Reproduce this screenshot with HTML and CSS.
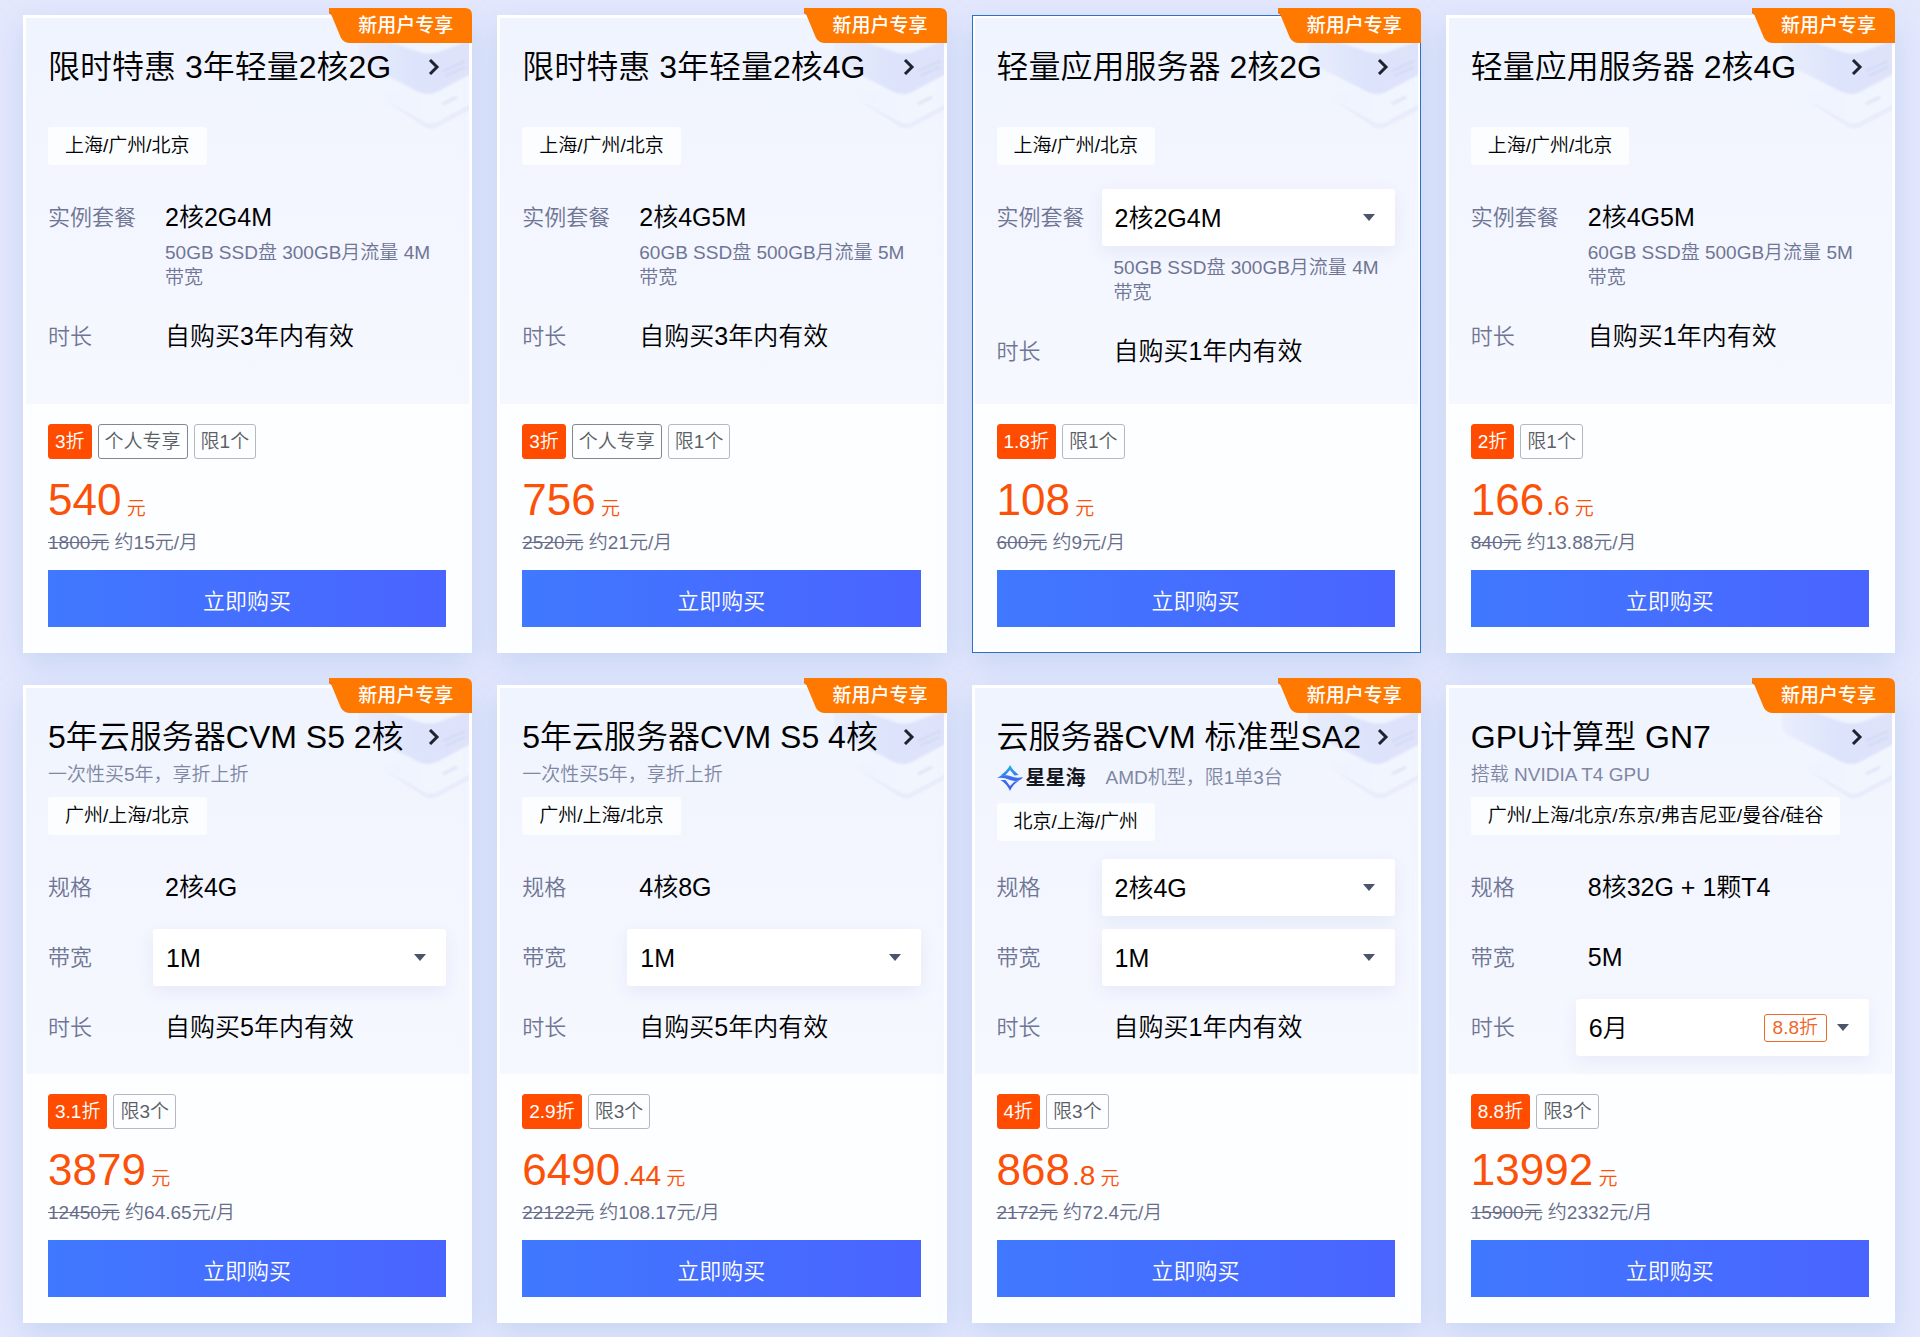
FILE: index.html
```html
<!DOCTYPE html>
<html lang="zh-CN">
<head>
<meta charset="utf-8">
<meta name="viewport" content="width=device-width, initial-scale=1">
<title>云服务器特惠</title>
<link rel="stylesheet" href="styles.css">
</head>
<body>
<svg class="sprite" width="0" height="0" aria-hidden="true">
  <defs>
    <linearGradient id="slab" x1="0" y1="0" x2="1" y2="0">
      <stop offset="0" stop-color="#e9edfd"/>
      <stop offset="0.5" stop-color="#d9e1fb"/>
      <stop offset="1" stop-color="#dde1fa"/>
    </linearGradient>
    <linearGradient id="base" x1="0" y1="0" x2="1" y2="0">
      <stop offset="0" stop-color="#eff3fe"/>
      <stop offset="1" stop-color="#f3f6fe"/>
    </linearGradient>
    <linearGradient id="star" x1="0" y1="0" x2="0" y2="1">
      <stop offset="0" stop-color="#22b5e6"/>
      <stop offset="0.5" stop-color="#3a6ff0"/>
      <stop offset="1" stop-color="#3f5cf5"/>
    </linearGradient>
    <filter id="soft" x="-10%" y="-10%" width="120%" height="120%"><feGaussianBlur stdDeviation="1"/></filter>
  </defs>
  <symbol id="decor" viewBox="0 0 112 116">
    <g filter="url(#soft)">
      <path d="M24 80 L68 104 Q74 107 80 104 L114 84 L114 91 L80 109 Q74 112 68 109 Z" fill="#e6eafa"/>
      <path d="M24 78 L60 68 L114 54 L114 86 L82 103 Q74 107 66 103 Z" fill="url(#base)"/>
      <path d="M2 22 L114 22 L114 56 L80 74 Q71 78 62 74 L8 47 Q2 43 2 38 Z" fill="url(#slab)"/>
      <path d="M26 22 L114 22 L82 34 Q72 37 62 34 Z" fill="#f0f4fe"/>
      <path d="M86 53 L108 43 M88 58 L108 49" stroke="#cdd5f3" stroke-width="2" fill="none"/>
      <path d="M86 86 L100 79" stroke="#dde2f4" stroke-width="3" fill="none"/>
    </g>
  </symbol>
  <symbol id="ribbon" viewBox="0 0 143 35">
    <path d="M0 0 H3 V7 L0 5 Z" fill="#c25400"/>
    <path d="M0 0 H136 Q143 0 143 7 V35 H21 Q15 35 12 30 L2 6 L0 4 Z" fill="#ff7800"/>
  </symbol>
  <symbol id="chevron" viewBox="0 0 12 16">
    <path d="M2 1 L9 8 L2 15" fill="none" stroke="#1d2330" stroke-width="3"/>
  </symbol>
  <symbol id="caret" viewBox="0 0 12 7">
    <path d="M0 0 H12 L6 7 Z" fill="#4b5468"/>
  </symbol>
  <symbol id="starsea" viewBox="0 0 26 26">
    <path fill="url(#star)" fill-rule="evenodd" d="M13 0 Q16 6 22 10 L17.500 10.500 L13 5 L8.500 10 L3.500 10.500 Q10 6 13 0 Z M0 13 Q6 8 13 11 Q20 14 26 12 Q22 18 13 15 Q6 12 0 13 Z M13 26 Q10 19 3.500 15 L8.500 15 L13 21 L17.500 16.500 L22 16 Q16 19 13 26 Z"/>
  </symbol>
</svg>

<main class="grid">

  <article class="card">
    <span class="badge"><svg class="badge-shape"><use href="#ribbon"/></svg><span class="badge-text">新用户专享</span></span>
    <div class="panel">
      <svg class="decor"><use href="#decor"/></svg>
      <header class="head">
        <div class="intro">
          <a class="title" href="#"><span>限时特惠 3年轻量2核2G</span><svg class="chevron"><use href="#chevron"/></svg></a>
        </div>
        <span class="region">上海/广州/北京</span>
      </header>
      <dl class="specs">
        <div class="row"><dt>实例套餐</dt><dd><p class="value">2核2G4M</p><p class="desc">50GB SSD盘 300GB月流量 4M带宽</p></dd></div>
        <div class="row"><dt>时长</dt><dd><p class="value">自购买3年内有效</p></dd></div>
      </dl>
    </div>
    <div class="foot">
      <div class="tags"><span class="tag tag-hot">3折</span><span class="tag tag-dark">个人专享</span><span class="tag">限1个</span></div>
      <p class="price"><strong>540</strong> 元</p>
      <p class="old"><del>1800元</del> 约15元/月</p>
      <button class="buy" type="button">立即购买</button>
    </div>
  </article>

  <article class="card">
    <span class="badge"><svg class="badge-shape"><use href="#ribbon"/></svg><span class="badge-text">新用户专享</span></span>
    <div class="panel">
      <svg class="decor"><use href="#decor"/></svg>
      <header class="head">
        <div class="intro">
          <a class="title" href="#"><span>限时特惠 3年轻量2核4G</span><svg class="chevron"><use href="#chevron"/></svg></a>
        </div>
        <span class="region">上海/广州/北京</span>
      </header>
      <dl class="specs">
        <div class="row"><dt>实例套餐</dt><dd><p class="value">2核4G5M</p><p class="desc">60GB SSD盘 500GB月流量 5M带宽</p></dd></div>
        <div class="row"><dt>时长</dt><dd><p class="value">自购买3年内有效</p></dd></div>
      </dl>
    </div>
    <div class="foot">
      <div class="tags"><span class="tag tag-hot">3折</span><span class="tag tag-dark">个人专享</span><span class="tag">限1个</span></div>
      <p class="price"><strong>756</strong> 元</p>
      <p class="old"><del>2520元</del> 约21元/月</p>
      <button class="buy" type="button">立即购买</button>
    </div>
  </article>

  <article class="card card-active">
    <span class="badge"><svg class="badge-shape"><use href="#ribbon"/></svg><span class="badge-text">新用户专享</span></span>
    <div class="panel">
      <svg class="decor"><use href="#decor"/></svg>
      <header class="head">
        <div class="intro">
          <a class="title" href="#"><span>轻量应用服务器 2核2G</span><svg class="chevron"><use href="#chevron"/></svg></a>
        </div>
        <span class="region">上海/广州/北京</span>
      </header>
      <dl class="specs">
        <div class="row"><dt><label for="plan-3">实例套餐</label></dt><dd><div class="picker"><select id="plan-3"><option>2核2G4M</option></select><span class="picker-end"><svg class="caret"><use href="#caret"/></svg></span></div><p class="desc">50GB SSD盘 300GB月流量 4M带宽</p></dd></div>
        <div class="row"><dt>时长</dt><dd><p class="value">自购买1年内有效</p></dd></div>
      </dl>
    </div>
    <div class="foot">
      <div class="tags"><span class="tag tag-hot">1.8折</span><span class="tag">限1个</span></div>
      <p class="price"><strong>108</strong> 元</p>
      <p class="old"><del>600元</del> 约9元/月</p>
      <button class="buy" type="button">立即购买</button>
    </div>
  </article>

  <article class="card">
    <span class="badge"><svg class="badge-shape"><use href="#ribbon"/></svg><span class="badge-text">新用户专享</span></span>
    <div class="panel">
      <svg class="decor"><use href="#decor"/></svg>
      <header class="head">
        <div class="intro">
          <a class="title" href="#"><span>轻量应用服务器 2核4G</span><svg class="chevron"><use href="#chevron"/></svg></a>
        </div>
        <span class="region">上海/广州/北京</span>
      </header>
      <dl class="specs">
        <div class="row"><dt>实例套餐</dt><dd><p class="value">2核4G5M</p><p class="desc">60GB SSD盘 500GB月流量 5M带宽</p></dd></div>
        <div class="row"><dt>时长</dt><dd><p class="value">自购买1年内有效</p></dd></div>
      </dl>
    </div>
    <div class="foot">
      <div class="tags"><span class="tag tag-hot">2折</span><span class="tag">限1个</span></div>
      <p class="price"><strong>166</strong><span class="cents">.6</span> 元</p>
      <p class="old"><del>840元</del> 约13.88元/月</p>
      <button class="buy" type="button">立即购买</button>
    </div>
  </article>

  <article class="card">
    <span class="badge"><svg class="badge-shape"><use href="#ribbon"/></svg><span class="badge-text">新用户专享</span></span>
    <div class="panel">
      <svg class="decor"><use href="#decor"/></svg>
      <header class="head">
        <div class="intro">
          <a class="title" href="#"><span>5年云服务器CVM S5 2核</span><svg class="chevron"><use href="#chevron"/></svg></a>
          <p class="sub">一次性买5年，享折上折</p>
        </div>
        <span class="region">广州/上海/北京</span>
      </header>
      <dl class="specs">
        <div class="row"><dt>规格</dt><dd><p class="value">2核4G</p></dd></div>
        <div class="row"><dt><label for="band-5">带宽</label></dt><dd><div class="picker"><select id="band-5"><option>1M</option></select><span class="picker-end"><svg class="caret"><use href="#caret"/></svg></span></div></dd></div>
        <div class="row"><dt>时长</dt><dd><p class="value">自购买5年内有效</p></dd></div>
      </dl>
    </div>
    <div class="foot">
      <div class="tags"><span class="tag tag-hot">3.1折</span><span class="tag">限3个</span></div>
      <p class="price"><strong>3879</strong> 元</p>
      <p class="old"><del>12450元</del> 约64.65元/月</p>
      <button class="buy" type="button">立即购买</button>
    </div>
  </article>

  <article class="card">
    <span class="badge"><svg class="badge-shape"><use href="#ribbon"/></svg><span class="badge-text">新用户专享</span></span>
    <div class="panel">
      <svg class="decor"><use href="#decor"/></svg>
      <header class="head">
        <div class="intro">
          <a class="title" href="#"><span>5年云服务器CVM S5 4核</span><svg class="chevron"><use href="#chevron"/></svg></a>
          <p class="sub">一次性买5年，享折上折</p>
        </div>
        <span class="region">广州/上海/北京</span>
      </header>
      <dl class="specs">
        <div class="row"><dt>规格</dt><dd><p class="value">4核8G</p></dd></div>
        <div class="row"><dt><label for="band-6">带宽</label></dt><dd><div class="picker"><select id="band-6"><option>1M</option></select><span class="picker-end"><svg class="caret"><use href="#caret"/></svg></span></div></dd></div>
        <div class="row"><dt>时长</dt><dd><p class="value">自购买5年内有效</p></dd></div>
      </dl>
    </div>
    <div class="foot">
      <div class="tags"><span class="tag tag-hot">2.9折</span><span class="tag">限3个</span></div>
      <p class="price"><strong>6490</strong><span class="cents">.44</span> 元</p>
      <p class="old"><del>22122元</del> 约108.17元/月</p>
      <button class="buy" type="button">立即购买</button>
    </div>
  </article>

  <article class="card">
    <span class="badge"><svg class="badge-shape"><use href="#ribbon"/></svg><span class="badge-text">新用户专享</span></span>
    <div class="panel">
      <svg class="decor"><use href="#decor"/></svg>
      <header class="head">
        <div class="intro">
          <a class="title" href="#"><span>云服务器CVM 标准型SA2</span><svg class="chevron"><use href="#chevron"/></svg></a>
          <p class="sub sub-brand"><svg class="star"><use href="#starsea"/></svg><b class="brand">星星海</b><span>AMD机型，限1单3台</span></p>
        </div>
        <span class="region">北京/上海/广州</span>
      </header>
      <dl class="specs">
        <div class="row"><dt><label for="spec-7">规格</label></dt><dd><div class="picker"><select id="spec-7"><option>2核4G</option></select><span class="picker-end"><svg class="caret"><use href="#caret"/></svg></span></div></dd></div>
        <div class="row"><dt><label for="band-7">带宽</label></dt><dd><div class="picker"><select id="band-7"><option>1M</option></select><span class="picker-end"><svg class="caret"><use href="#caret"/></svg></span></div></dd></div>
        <div class="row"><dt>时长</dt><dd><p class="value">自购买1年内有效</p></dd></div>
      </dl>
    </div>
    <div class="foot">
      <div class="tags"><span class="tag tag-hot">4折</span><span class="tag">限3个</span></div>
      <p class="price"><strong>868</strong><span class="cents">.8</span> 元</p>
      <p class="old"><del>2172元</del> 约72.4元/月</p>
      <button class="buy" type="button">立即购买</button>
    </div>
  </article>

  <article class="card">
    <span class="badge"><svg class="badge-shape"><use href="#ribbon"/></svg><span class="badge-text">新用户专享</span></span>
    <div class="panel">
      <svg class="decor"><use href="#decor"/></svg>
      <header class="head">
        <div class="intro">
          <a class="title" href="#"><span>GPU计算型 GN7</span><svg class="chevron"><use href="#chevron"/></svg></a>
          <p class="sub">搭载 NVIDIA T4 GPU</p>
        </div>
        <span class="region">广州/上海/北京/东京/弗吉尼亚/曼谷/硅谷</span>
      </header>
      <dl class="specs">
        <div class="row"><dt>规格</dt><dd><p class="value">8核32G + 1颗T4</p></dd></div>
        <div class="row"><dt>带宽</dt><dd><p class="value">5M</p></dd></div>
        <div class="row"><dt><label for="term-8">时长</label></dt><dd><div class="picker"><select id="term-8"><option>6月</option></select><span class="picker-end"><span class="off">8.8折</span><svg class="caret"><use href="#caret"/></svg></span></div></dd></div>
      </dl>
    </div>
    <div class="foot">
      <div class="tags"><span class="tag tag-hot">8.8折</span><span class="tag">限3个</span></div>
      <p class="price"><strong>13992</strong> 元</p>
      <p class="old"><del>15900元</del> 约2332元/月</p>
      <button class="buy" type="button">立即购买</button>
    </div>
  </article>

</main>
</body>
</html>
```

FILE: styles.css
```css
* {
  box-sizing: border-box;
}

body {
  margin: 0;
  background: #e4e8fd;
  color: #000;
  font-family: "Liberation Sans", "Noto Sans CJK SC", sans-serif;
  font-size: 19px;
  font-weight: 350;
}

p,
dl,
dd {
  margin: 0;
}

.sprite {
  position: absolute;
}

.grid {
  display: grid;
  grid-template-columns: repeat(4, minmax(0, 1fr));
  gap: 32px 25px;
  padding: 15px 25px 14px 23px;
}

/* Card */
.card {
  position: relative;
  display: flex;
  flex-direction: column;
  border: 3px solid #fff;
  background: #fdfeff;
  box-shadow: 0 10px 30px rgba(120, 160, 220, 0.28);
}

.card-active {
  outline: 1px solid #2f6fc4;
  outline-offset: -1px;
}

.badge {
  position: absolute;
  top: -10px;
  right: -3px;
  z-index: 1;
  width: 143px;
  height: 35px;
  padding-left: 29px;
  color: #fff;
  font-weight: 500;
  line-height: 35px;
}

.badge-shape {
  position: absolute;
  inset: 0;
  width: 143px;
  height: 35px;
}

.badge-text {
  position: relative;
}

.panel {
  position: relative;
  flex: 1;
  min-height: 386px;
  padding: 0 23px 18px 22px;
  background: linear-gradient(#f0f4fe, #f6f8ff);
}

.decor {
  position: absolute;
  top: 0;
  right: 0;
  width: 112px;
  height: 116px;
  opacity: 0.85;
}

.head {
  position: relative;
  min-height: 171px;
}

.intro {
  min-height: 109px;
  padding: 29px 0 10px;
}

.title {
  display: flex;
  align-items: center;
  justify-content: space-between;
  padding-right: 6px;
  color: #000;
  font-size: 32px;
  line-height: 40px;
  white-space: nowrap;
  text-decoration: none;
}

.chevron {
  flex: none;
  width: 12px;
  height: 16px;
}

.sub {
  margin-top: 6px;
  color: #7f87a3;
  line-height: 24px;
}

.sub-brand {
  display: flex;
  align-items: center;
  line-height: 30px;
}

.star {
  width: 26px;
  height: 26px;
  margin-right: 3px;
}

.brand {
  margin-right: 20px;
  color: #15181f;
  font-size: 20px;
  font-weight: 700;
}

.region {
  display: inline-block;
  padding: 0 17px;
  border-radius: 3px;
  background: #fbfdff;
  line-height: 38px;
  white-space: nowrap;
  vertical-align: top;
}

/* Specification rows */
.specs {
  display: grid;
  gap: 13px;
}

.row {
  display: grid;
  grid-template-columns: 105px minmax(0, 1fr);
  min-height: 57px;
}

.row dt {
  color: #6f7594;
  font-size: 22px;
  line-height: 57px;
  height: 57px;
  white-space: nowrap;
}

.value {
  padding: 14px 0 0 12px;
  font-size: 25px;
  line-height: 28px;
  white-space: nowrap;
}

.desc {
  margin: 9px 0 5px;
  padding-left: 12px;
  color: #6f7594;
  line-height: 25px;
}

.picker {
  position: relative;
}

.picker select {
  display: block;
  width: 100%;
  height: 57px;
  padding: 0 40px 0 13px;
  border: 0;
  border-radius: 3px;
  appearance: none;
  background: #fff;
  box-shadow: 0 6px 18px rgba(60, 80, 170, 0.08);
  color: #000;
  font: inherit;
  font-size: 25px;
}

.picker-end {
  position: absolute;
  top: 0;
  right: 20px;
  display: flex;
  gap: 10px;
  align-items: center;
  height: 57px;
  pointer-events: none;
}

.caret {
  width: 12px;
  height: 7px;
}

.off {
  padding: 0 8px;
  border: 1px solid #f0662a;
  border-radius: 3px;
  color: #f0662a;
  line-height: 26px;
}

/* Price and purchase */
.foot {
  padding: 20px 23px 23px 22px;
}

.tags {
  display: flex;
  gap: 6px;
}

.tag {
  padding: 0 6px;
  border: 1px solid #b4b8c0;
  border-radius: 3px;
  color: #5c5f66;
  line-height: 33px;
}

.tag-dark {
  border-color: #82868f;
}

.tag-hot {
  border-color: #ff4c00;
  background: #ff4c00;
  color: #fff;
}

.price {
  margin-top: 20px;
  color: #fb5109;
  line-height: 42px;
}

.price strong {
  font-size: 44px;
  font-weight: 400;
}

.cents {
  margin-left: 2px;
  font-size: 28px;
}

.old {
  color: #686e8a;
  line-height: 26px;
}

.buy {
  display: block;
  width: 100%;
  height: 57px;
  margin-top: 14px;
  padding: 0;
  border: 0;
  background: linear-gradient(90deg, #4078ff, #4a64ff);
  color: #fff;
  font: inherit;
  font-size: 22px;
}
```
